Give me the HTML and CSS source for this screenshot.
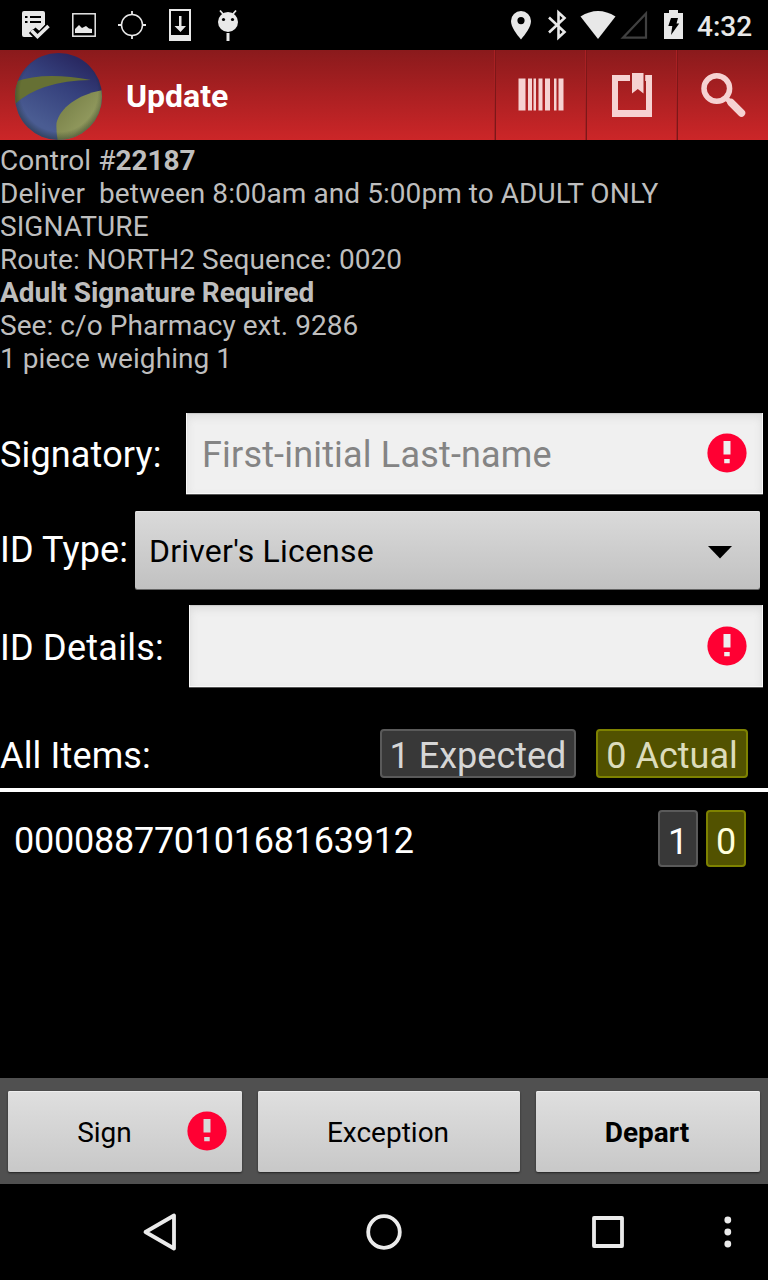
FILE: index.html
```html
<!DOCTYPE html>
<html lang="en">
<head>
<meta charset="utf-8">
<title>Update</title>
<link rel="stylesheet" href="styles.css">
</head>
<body>
<svg class="defs" width="0" height="0" aria-hidden="true">
  <symbol id="alert" viewBox="0 0 40 40">
    <circle cx="20" cy="20" r="19.600" fill="#ff0033"/>
    <path d="M16.500 8h7v13.500h-7zM17.200 26h5.500v4.200h-5.500z" fill="currentColor"/>
  </symbol>
</svg>

<div class="status">
  <div class="status-left">
    <svg class="slot" viewBox="12 0 48 50">
      <path d="M24 11h19a2 2 0 0 1 2 2v12l-5.500 6-4-3.500-5 4.500 5 5H24a2 2 0 0 1-2-2V13a2 2 0 0 1 2-2z" fill="#e8e8e8"/>
      <path d="M25 17h2.500M30 17h11M25 22h2.500M30 22h11" stroke="#000" stroke-width="1.800" fill="none"/>
      <path d="M31 31l6 6 11-11" stroke="#000" stroke-width="6" fill="none"/>
      <path d="M31.500 30.500l6 6L48.500 26" stroke="#e8e8e8" stroke-width="3.600" fill="none"/>
    </svg>
    <svg class="slot" viewBox="60 0 48 50">
      <rect x="72.800" y="13.800" width="22.400" height="22.400" fill="none" stroke="#e8e8e8" stroke-width="1.500"/>
      <path d="M75 33v-4l4-4 3 3 4-2 3 2.500 3 .5v4z" fill="#e8e8e8"/>
    </svg>
    <svg class="slot" viewBox="108 0 48 50">
      <circle cx="132" cy="25" r="10.500" fill="none" stroke="#e8e8e8" stroke-width="1.500"/>
      <path d="M132 11v4M132 35v4M118 25h4M142 25h4" stroke="#e8e8e8" stroke-width="1.800"/>
    </svg>
    <svg class="slot" viewBox="156 0 48 50">
      <rect x="170" y="10" width="20" height="30" fill="none" stroke="#e8e8e8" stroke-width="2"/>
      <path d="M170 35h20v5h-20zM179 16h2.500v10h4.500l-5.500 6-6-6h4.500z" fill="#e8e8e8"/>
    </svg>
    <svg class="slot" viewBox="204 0 48 50">
      <circle cx="228" cy="22" r="10" fill="#e8e8e8"/>
      <path d="M220 10.500l3.500 4M236 10.500l-3.500 4" stroke="#e8e8e8" stroke-width="1.800"/>
      <path d="M226.500 33h3v8h-3z" fill="#e8e8e8"/>
      <circle cx="223.500" cy="19.500" r="1.600"/><circle cx="232.500" cy="19.500" r="1.600"/>
    </svg>
  </div>
  <div class="status-right">
    <svg width="180" height="50" viewBox="510 0 180 50">
      <path fill-rule="evenodd" d="M521 11a10 10 0 0 1 10 10c0 6-5.500 13-10 18.500-4.500-5.500-10-12.500-10-18.500a10 10 0 0 1 10-10zm0 6a3.600 3.600 0 1 0 0 7.200 3.600 3.600 0 0 0 0-7.200z" fill="#e8e8e8"/>
      <path d="M549 17.500l15.500 14.500-6 5.500V12.500l6 5.500L549 32.500" fill="none" stroke="#e8e8e8" stroke-width="2.600"/>
      <path d="M580.500 16.500q17.500-11 35 0L598 39z" fill="#e8e8e8"/>
      <path d="M646 13.500v24.200h-23z" fill="none" stroke="#404040" stroke-width="2.200"/>
      <path d="M664 13h5v-3h9v3h5v26h-19z" fill="#e8e8e8"/>
      <path d="M671 18h7l-1.500 5.500h2.700L671 35l1.300-9h-4z"/>
    </svg>
    <span class="clock">4:32</span>
  </div>
</div>

<div class="appbar">
  <svg class="logo" viewBox="0 0 90 90">
    <defs>
      <linearGradient id="blue" x1=".7" y1=".1" x2=".3" y2=".8">
        <stop offset="0" stop-color="#292962"/><stop offset=".4" stop-color="#35407c"/>
        <stop offset="1" stop-color="#4a5c92"/>
      </linearGradient>
      <radialGradient id="shade" cx=".5" cy=".46" r=".55">
        <stop offset=".78" stop-color="#102018" stop-opacity="0"/><stop offset="1" stop-color="#102018" stop-opacity=".55"/>
      </radialGradient>
      <linearGradient id="olive" x2="1" y2="1"><stop stop-color="#6f7840"/><stop offset=".6" stop-color="#8f975c"/><stop offset="1" stop-color="#7c8444"/></linearGradient>
      <clipPath id="ball"><circle cx="44.500" cy="46.500" r="43.500"/></clipPath>
    </defs>
    <g clip-path="url(#ball)">
      <rect width="90" height="92" fill="url(#blue)"/>
      <path d="M0 32Q30 21 77 30Q25 31 0 55z" fill="#667034"/>
      <path d="M90 40C64 44 46 58 42.500 73Q42 82 44 92H90z" fill="url(#olive)"/>
      <rect width="90" height="92" fill="url(#shade)"/>
    </g>
  </svg>
  <h1 class="title">Update</h1>
  <div class="actions">
    <div class="action"><svg viewBox="494 50 91 90" fill="#f6d2d2">
      <path d="M518.500 78.500h7v32h-7zM528 78.500h4v32h-4zM533.500 78.500h2.500v32h-2.500zM538.500 78.500h4v32h-4zM545 78.500h5v32h-5zM554 78.500h2.500v32H554zM558.500 78.500h5v32h-5z"/>
    </svg></div>
    <div class="action"><svg viewBox="585 50 91 90" fill="#f6d2d2">
      <path d="M612 75h18v6h-12v29h28V81h-.8v-6h6.800v42h-40zM632 73h11.500v20.500l-5.700-4.500-5.800 4.500z"/>
    </svg></div>
    <div class="action action-search"><svg viewBox="676 50 91 90" fill="none" stroke="#f6d2d2">
      <circle cx="716.800" cy="88.500" r="12.800" stroke-width="5.500"/>
      <path d="M726 98l4 4" stroke-width="5"/>
      <path d="M731 102.500l10.500 10.500" stroke-width="7.500" stroke-linecap="round"/>
    </svg></div>
  </div>
</div>

<div class="info">Control #<b>22187</b><br>Deliver&nbsp; between 8:00am and 5:00pm to ADULT ONLY SIGNATURE<br>Route: NORTH2 Sequence: 0020<br><b>Adult Signature Required</b><br>See: c/o Pharmacy ext. 9286<br>1 piece weighing 1</div>

<div class="form">
  <div class="row row-signatory">
    <label class="label label-signatory">Signatory:</label>
    <div class="field"><span class="hint">First-initial Last-name</span><svg class="alert"><use href="#alert"/></svg></div>
  </div>
  <div class="row row-type">
    <label class="label label-type">ID Type:</label>
    <div class="spinner"><span class="choice">Driver's License</span><svg class="caret" viewBox="0 0 24 13"><path d="M0 0h24L12 12.500z"/></svg></div>
  </div>
  <div class="row row-details">
    <label class="label label-details">ID Details:</label>
    <div class="field"><span class="hint"></span><svg class="alert"><use href="#alert"/></svg></div>
  </div>
</div>

<div class="summary">
  <span class="label">All Items:</span>
  <span class="badge badge-expected">1 Expected</span>
  <span class="badge badge-actual">0 Actual</span>
</div>
<div class="items">
  <div class="item">
    <span class="code">00008877010168163912</span>
    <span class="count">1</span>
    <span class="count count-actual">0</span>
  </div>
</div>

<div class="buttons">
  <div class="button button-sign"><span class="sign-text">Sign</span><svg class="alert"><use href="#alert"/></svg></div>
  <div class="button button-exception">Exception</div>
  <div class="button button-depart">Depart</div>
</div>

<div class="nav">
  <svg width="768" height="96" viewBox="0 1184 768 96" fill="none" stroke="#ebebeb" stroke-width="3.800" stroke-linejoin="round">
    <path d="M145.500 1232L174 1215.500v33z"/>
    <circle cx="384" cy="1232" r="15.800"/>
    <rect x="594" y="1218" width="28" height="28"/>
    <g fill="#ebebeb" stroke="none"><circle cx="727.800" cy="1220" r="3.400"/><circle cx="727.800" cy="1232" r="3.400"/><circle cx="727.800" cy="1244" r="3.400"/></g>
  </svg>
</div>
</body>
</html>
```
FILE: styles.css
```css
* { box-sizing: border-box; }
body {
  margin: 0;
  width: 768px;
  height: 1280px;
  display: flex;
  flex-direction: column;
  overflow: hidden;
  background: #000;
  color: #fff;
  font-family: Roboto, sans-serif;
}
svg { display: block; flex: none; }
.defs { position: absolute; }

.status { height: 50px; flex: none; display: flex; justify-content: space-between; padding-left: 12px; }
.status-left { display: flex; }
.slot { width: 48px; height: 50px; }
.status-right { display: flex; width: 258px; }
.clock { margin-left: 7px; font-size: 28px; line-height: 53px; font-weight: 500; color: #e8e8e8; white-space: nowrap; }

.appbar {
  height: 90px;
  flex: none;
  display: flex;
  align-items: center;
  padding-left: 14px;
  background: linear-gradient(#8a1a1c, #cc2628);
}
.logo { width: 90px; height: 90px; }
.title { margin: 2px 0 0 22px; font-size: 32px; line-height: 38px; font-weight: 700; }
.actions { display: flex; margin-left: auto; }
.action { width: 91px; height: 90px; padding-left: 0; box-shadow: inset 1px 0 #a82023, inset 2px 0 #7d1718; }
.action-search { width: 92px; }
.action svg { width: 91px; height: 90px; }

.info { height: 273px; flex: none; padding-top: 4px; font-size: 28px; line-height: 33px; letter-spacing: 0.06px; color: #bebebe; }
.info b { letter-spacing: -0.05px; }

.row { display: flex; align-items: center; }
.row-signatory { height: 81px; padding-right: 5px; }
.row-type { height: 78px; margin-top: 17px; padding-right: 8px; }
.row-details { height: 82px; margin-top: 16px; padding-right: 5px; }
.label { flex: none; font-size: 36px; line-height: 42px; letter-spacing: 0.15px; white-space: nowrap; }
.label-signatory { width: 186px; padding-top: 2px; }
.label-type { width: 135px; }
.label-details { width: 189px; padding-top: 3px; letter-spacing: 0.25px; }
.field {
  flex: 1;
  height: 100%;
  display: flex;
  align-items: center;
  justify-content: space-between;
  padding: 0 15px 0 15px;
  background: #f0f0f0;
  border: solid #fafafa;
  border-width: 0 1px 1px;
  box-shadow: inset 0 1px 1px #c8c8c8, inset 0 4px 8px #dcdcdc, 0 1px #555;
}
.hint { padding-top: 4px; font-size: 36px; line-height: 42px; letter-spacing: 0.18px; color: #848484; }
.alert { width: 40px; height: 40px; color: #eee; }
.spinner {
  flex: 1;
  height: 100%;
  display: flex;
  align-items: center;
  justify-content: space-between;
  padding: 0 28px 0 14px;
  border-radius: 2px;
  background: linear-gradient(#dadada, #c1c1c1);
  box-shadow: inset 0 1px #e4e4e4, 0 1px #666;
  color: #000;
  font-size: 32px;
  line-height: 38px;
}
.choice { padding-top: 2px; letter-spacing: 0.2px; }
.caret { width: 24px; height: 13px; margin-top: 4px; }

.summary {
  height: 105px;
  flex: none;
  display: flex;
  align-items: flex-end;
  padding: 0 20px 10px 0;
  border-bottom: 4px solid #fff;
}
.summary .label { flex: 1; line-height: 44px; }
.badge, .count {
  display: flex;
  align-items: center;
  justify-content: center;
  border: 2px solid #5a5a5a;
  border-radius: 4px;
  background: #383838;
  font-size: 36px;
}
.badge { height: 49px; padding-top: 5px; color: #d6d6d6; }
.badge-expected { width: 196px; margin-right: 20px; }
.badge-actual { width: 152px; color: #dcdcbb; }
.badge-actual, .count-actual { background: #525200; border-color: #7e8200; }
.items { flex: 1; }
.item { display: flex; align-items: center; height: 93px; padding: 0 22px 0 14px; }
.code { flex: 1; font-size: 36px; line-height: 42px; padding-top: 5px; letter-spacing: -0.25px; }
.count { width: 40px; height: 57px; padding-top: 6px; margin-left: 8px; }
.count-actual { color: #ffffdc; }

.buttons {
  height: 106px;
  flex: none;
  display: flex;
  align-items: flex-start;
  gap: 16px;
  padding: 13px 8px 0;
  background: #505050;
}
.button {
  height: 81px;
  display: flex;
  align-items: center;
  justify-content: center;
  padding: 2px 2px 0 0;
  border-radius: 2px;
  background: linear-gradient(#dfdfdf, #c8c8c8);
  box-shadow: inset 0 1px #eee, 0 1px 2px #222;
  color: #000;
  font-size: 28px;
}
.button-sign { width: 234px; padding-right: 15px; }
.button-sign .alert { margin-top: -4px; color: #d8d8d8; }
.sign-text { flex: 1; text-align: center; padding-left: 14px; }
.button-exception { width: 262px; }
.button-depart { width: 224px; font-weight: 700; }
.nav { height: 96px; flex: none; }
```
